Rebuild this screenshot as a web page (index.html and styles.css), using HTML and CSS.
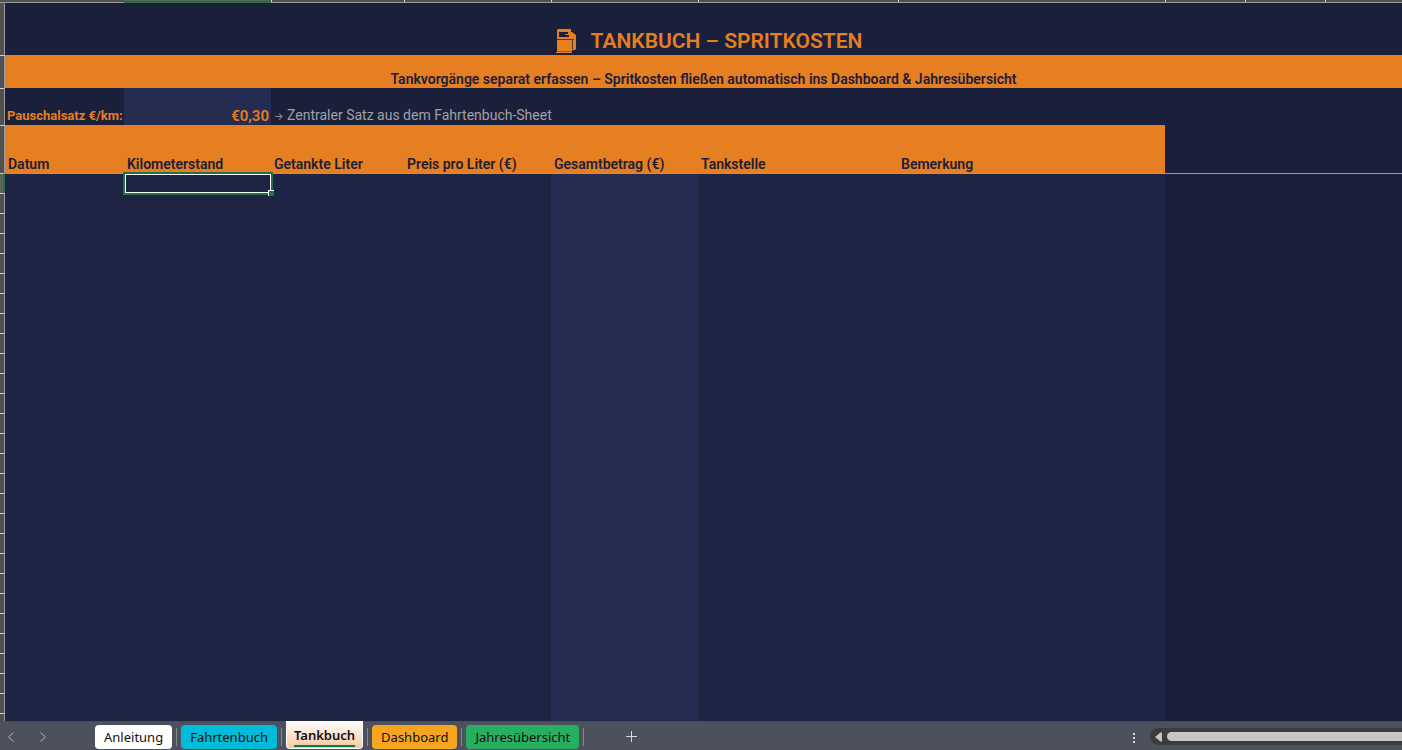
FILE: index.html
```
<!DOCTYPE html>
<html lang="de">
<head>
<meta charset="utf-8">
<title>Tankbuch – Spritkosten</title>
<link rel="stylesheet" href="styles.css">
</head>
<body>
<main class="sheet">
<table class="grid">
<colgroup>
<col class="w-gutter"><col class="w-a"><col class="w-b"><col class="w-c"><col class="w-b"><col class="w-b"><col class="w-f"><col class="w-g"><col class="w-h"><col class="w-h"><col>
</colgroup>
<thead>
<tr class="letters"><th class="corner"></th><th class="corner"></th><th class="current"></th><th></th><th></th><th></th><th></th><th></th><th></th><th></th><th></th></tr>
<tr class="row-title"><th class="gutter"></th><td colspan="10"><h1 class="title"><svg class="pump" viewBox="0 0 22 26" aria-hidden="true"><path fill="currentColor" fill-rule="evenodd" d="M3 1h13v3h1l4 3v14l-1 1h-3v3H1v-1h1V2zM4 4v5h10V7H10V6h3V4z"/><path fill="#1b203a" opacity=".75" d="M2 11h17v1H2zM17 12h1v9h-1z"/><path fill="#1b203a" opacity=".35" d="M2 23h15v1H2z"/></svg>TANKBUCH – SPRITKOSTEN</h1></td></tr>
<tr class="row-subtitle"><th class="gutter"></th><td colspan="10">Tankvorgänge separat erfassen – Spritkosten fließen automatisch ins Dashboard &amp; Jahresübersicht</td></tr>
<tr class="row-rate"><th class="gutter"></th><td class="rate-label">Pauschalsatz €/km:</td><td class="rate-value">€0,30</td><td class="rate-note" colspan="8"><span class="arrow">→</span> Zentraler Satz aus dem Fahrtenbuch-Sheet</td></tr>
<tr class="row-heads"><th class="gutter"></th><th>Datum</th><th>Kilometerstand</th><th>Getankte Liter</th><th>Preis pro Liter (€)</th><th>Gesamtbetrag (€)</th><th>Tankstelle</th><th>Bemerkung</th><td colspan="3"></td></tr>
</thead>
<tbody id="entries"></tbody>
</table>
</main>
<footer class="bar">
<div class="arrows">
<button class="icon-button" type="button" aria-label="Vorheriges Blatt"><svg width="8" height="10" viewBox="0 0 8 10"><path d="M6.500.500 1.500 5l5 4.500"/></svg></button>
<button class="icon-button" type="button" aria-label="Nächstes Blatt"><svg width="8" height="10" viewBox="0 0 8 10"><path d="M1.500.500 6.500 5l-5 4.500"/></svg></button>
</div>
<nav class="tabs">
<button class="tab tab-white" type="button">Anleitung</button><i class="divider"></i>
<button class="tab tab-cyan" type="button">Fahrtenbuch</button><i class="divider"></i>
<button class="tab tab-active" type="button"><span>Tankbuch</span></button><i class="divider"></i>
<button class="tab tab-amber" type="button">Dashboard</button><i class="divider"></i>
<button class="tab tab-green" type="button">Jahresübersicht</button><i class="divider"></i>
</nav>
<button class="icon-button add" type="button" aria-label="Neues Blatt"><svg width="12" height="12" viewBox="0 0 12 12"><path d="M5.500 0v11M0 5.500h11"/></svg></button>
<div class="grip"><i></i><i></i><i></i></div>
<div class="scroll"><svg width="8" height="10" viewBox="0 0 8 10"><path d="M0 5 5.500.500H7v9H5.500z"/></svg><div class="thumb"></div></div>
</footer>
<script src="script.js"></script>
</body>
</html>
```
FILE: script.js
```
const entries = document.getElementById("entries");
const rowCount = Math.max(28, Math.ceil(window.innerHeight / 20));
for (let r = 0; r < rowCount; r++) {
  const row = entries.insertRow();
  const head = document.createElement("th");
  head.className = "gutter";
  row.append(head);
  for (let c = 0; c < 10; c++) {
    const cell = row.insertCell();
    if (c === 4) cell.className = "computed";
    if (c > 6) cell.className = "outside";
    if (r === 0 && c === 1) {
      cell.className = "selected";
      cell.innerHTML = '<div class="selection"><div class="handle"></div></div>';
    }
  }
}
```
FILE: styles.css
```
* { box-sizing: border-box; }
body {
  margin: 0;
  height: 100vh;
  display: flex;
  flex-direction: column;
  overflow: hidden;
  background: #1b203a;
  font-family: Roboto, "Liberation Sans", sans-serif;
  font-size: 14px;
}
.sheet { flex: 1; min-height: 0; overflow: hidden; }
.grid { width: 100%; table-layout: fixed; border-collapse: separate; border-spacing: 0; }
.w-gutter { width: 5px; }
.w-a { width: 119px; }
.w-b { width: 147px; }
.w-c { width: 133px; }
.w-f { width: 200px; }
.w-g { width: 267px; }
.w-h { width: 80px; }
th, td { padding: 0 3px; text-align: left; vertical-align: bottom; white-space: nowrap; line-height: 18px; }

.letters th {
  height: 3px;
  padding: 0;
  background: linear-gradient(#d0d0d0, #d0d0d0) 0 0 / 1px 2px no-repeat #505050;
  border-bottom: 1px solid #999;
}
.letters .corner { background: #505050; }
.letters .current { background: #606060; border-bottom: 2px solid #217346; }

.gutter { padding: 0; background: #505050; border-top: 1px solid #d0d0d0; border-right: 1px solid #999; }
.row-title .gutter { border-top-color: #505050; }

.row-title td { height: 52px; text-align: center; }
.title {
  display: flex;
  justify-content: center;
  align-items: center;
  gap: 14px;
  margin: 0;
  padding-left: 10px;
  color: #e67e22;
  font-size: 21px;
  font-weight: 600;
  line-height: 28px;
}
.pump { width: 22px; height: 26px; }
.row-subtitle td { height: 33px; background: #e67e22; color: #1b203a; font-weight: 600; text-align: center; }
.row-rate td { height: 37px; }
.row-rate .rate-label { padding: 0 0 0 2px; color: #e67e22; font-size: 13px; font-weight: 700; }
.row-rate .rate-value { background: #242c52; color: #e67e22; font-size: 15px; font-weight: 600; text-align: right; padding-right: 2px; }
.row-rate .rate-note { color: #a0a0a8; }
.arrow { font-family: Inter, sans-serif; font-size: 10px; }
.row-heads th { height: 48px; color: #1b203a; font-weight: 600; background: #e67e22; }
.row-heads .gutter { background: #505050; }

#entries td { height: 20px; padding: 0; background: #1e2444; }
#entries .computed { background: #242c52; }
#entries .outside { background: #1b203a; }
#entries tr:first-child td { border-top: 1px solid #999; }
#entries tr:first-child .gutter { background: #606060; border-right: 2px solid #217346; }
#entries .selected { position: relative; }
.selection {
  position: absolute;
  inset: -2px -2px -2px -1px;
  border: 2px solid #217346;
  outline: 1px solid #fff;
  outline-offset: -3px;
}
.handle {
  position: absolute;
  right: -3px;
  bottom: -3px;
  width: 6px;
  height: 6px;
  background: #217346;
  border-top: 1px solid #fff;
  border-left: 1px solid #fff;
}

.bar {
  flex: none;
  display: flex;
  align-items: stretch;
  height: 29px;
  background: #4c515d;
  border-top: 1px solid #484b53;
  font-family: "Noto Sans", "Open Sans", sans-serif;
}
.bar button { border: 0; margin: 0; font: inherit; }
.icon-button { display: flex; align-items: center; padding: 2px 0 0; background: none; }
.icon-button svg { fill: none; stroke: #b0b3b8; stroke-width: 1; }
.arrows { display: flex; gap: 24px; width: 95px; padding-left: 7px; }
.tabs { display: flex; align-items: flex-start; gap: 4px; }
.bar .tab { height: 24px; margin-top: 3px; padding: 0 9px; border-radius: 4px; color: #111; line-height: 24px; font-size: 13px; }
.bar .tab-white { background: #fff; }
.bar .tab-cyan { background: #00bcd8; }
.bar .tab-amber { background: #f7a521; }
.bar .tab-green { background: #27ae60; }
.bar .tab-active {
  height: 28px;
  margin-top: -1px;
  padding: 2px 7px 0;
  border: 1px solid #fff;
  border-top: 0;
  border-radius: 0 0 4px 4px;
  background: linear-gradient(#fff, #f5c9a3);
  font-weight: 600;
}
.tab-active span { display: block; height: 22px; line-height: 20px; border-bottom: 2px solid #107c41; }
.divider { width: 1px; height: 18px; margin-top: 6px; background: #85888f; }
.bar .add { margin-left: 42px; }
.add svg { stroke: #d8d8d8; }
.grip { display: flex; flex-direction: column; justify-content: center; gap: 2px; margin-left: auto; padding-top: 3px; }
.grip i { width: 2px; height: 2px; background: #d8d8d8; }
.scroll {
  display: flex;
  align-items: center;
  gap: 4px;
  width: 18%;
  height: 17px;
  margin: 6px 0 0 15px;
  padding-left: 5px;
  background: #3c3c3c;
  border-radius: 9px 0 0 9px;
}
.scroll svg { fill: #c6c6c6; }
.thumb { flex: 1; height: 9px; background: #c6c6c6; border-radius: 5px 0 0 5px; }
```
